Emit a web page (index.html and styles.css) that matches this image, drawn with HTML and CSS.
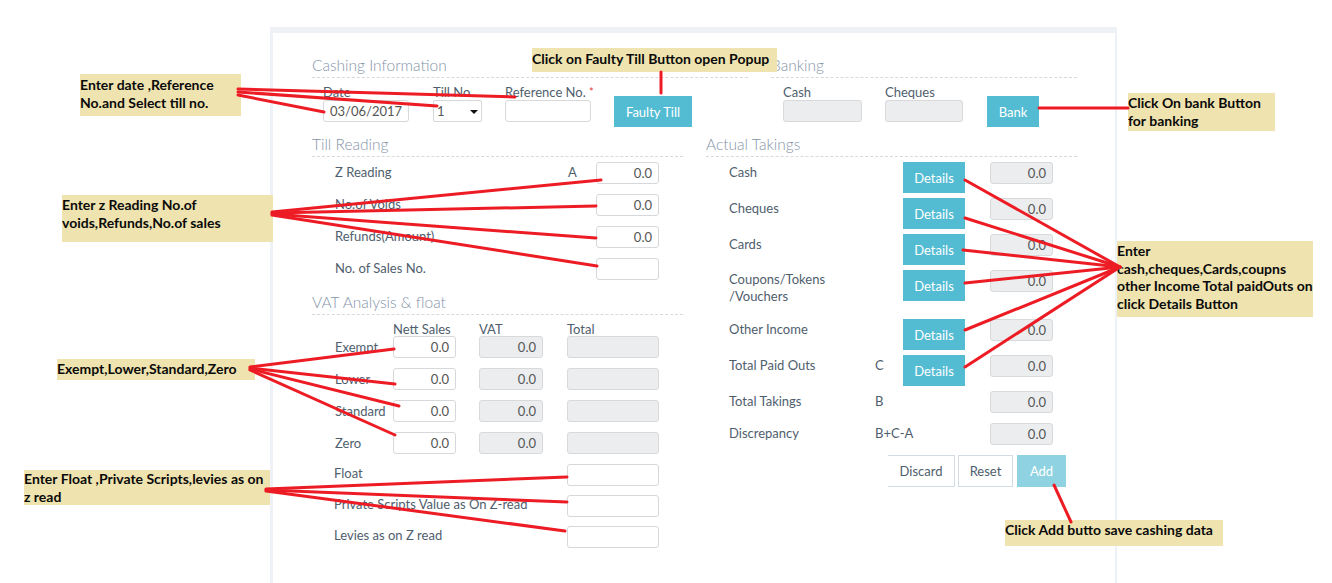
FILE: index.html
```html
<!DOCTYPE html>
<html>
<head>
<meta charset="utf-8">
<title>Cashing</title>
<link rel="stylesheet" href="styles.css">
</head>
<body>
<div class="page">
  <div class="panel">
    <div class="card">
      <div class="top-row">
        <section class="sec-cash">
          <h2 class="sec-title">Cashing Information</h2>
          <div class="fields">
            <div class="field f-date"><label>Date</label><div class="input">03/06/2017</div></div>
            <div class="field f-till"><label>Till No.</label><div class="input select">1<span class="caret"></span></div></div>
            <div class="field f-ref"><label>Reference No. <span class="req">*</span></label><div class="input"></div></div>
            <button class="btn btn-info btn-faulty">Faulty Till</button>
          </div>
        </section>
        <section class="sec-bank">
          <h2 class="sec-title">Banking</h2>
          <div class="fields bank-fields">
            <div class="field f-bcash"><label>Cash</label><div class="input ro"></div></div>
            <div class="field f-bcheq"><label>Cheques</label><div class="input ro"></div></div>
            <button class="btn btn-info btn-bank">Bank</button>
          </div>
        </section>
      </div>

      <div class="main-row">
        <div class="col">
          <h2 class="sec-title">Till Reading</h2>
          <div class="till-rows">
            <div class="till-row"><span class="lbl">Z Reading</span><span class="letter">A</span><div class="input num">0.0</div></div>
            <div class="till-row"><span class="lbl">No.of Voids</span><span class="letter"></span><div class="input num">0.0</div></div>
            <div class="till-row"><span class="lbl">Refunds(Amount)</span><span class="letter"></span><div class="input num">0.0</div></div>
            <div class="till-row"><span class="lbl">No. of Sales No.</span><span class="letter"></span><div class="input num"></div></div>
          </div>

          <h2 class="sec-title vat-title">VAT Analysis &amp; float</h2>
          <div class="vat-head">
            <span class="h-nett">Nett Sales</span><span class="h-vat">VAT</span><span class="h-total">Total</span>
          </div>
          <div class="vat-row"><span class="lbl">Exempt</span><div class="input num in-nett">0.0</div><div class="input num ro in-vat">0.0</div><div class="input ro in-total"></div></div>
          <div class="vat-row"><span class="lbl">Lower</span><div class="input num in-nett">0.0</div><div class="input num ro in-vat">0.0</div><div class="input ro in-total"></div></div>
          <div class="vat-row"><span class="lbl">Standard</span><div class="input num in-nett">0.0</div><div class="input num ro in-vat">0.0</div><div class="input ro in-total"></div></div>
          <div class="vat-row"><span class="lbl">Zero</span><div class="input num in-nett">0.0</div><div class="input num ro in-vat">0.0</div><div class="input ro in-total"></div></div>
          <div class="float-row"><span class="lbl">Float</span><div class="input in-total"></div></div>
          <div class="float-row"><span class="lbl">Private Scripts Value as On Z-read</span><div class="input in-total"></div></div>
          <div class="float-row"><span class="lbl">Levies as on Z read</span><div class="input in-total"></div></div>
        </div>

        <div class="col">
          <h2 class="sec-title">Actual Takings</h2>
          <div class="tk-rows">
            <div class="tk-row"><span class="lbl">Cash</span><span class="letter"></span><button class="btn btn-info btn-det">Details</button><div class="input num ro">0.0</div></div>
            <div class="tk-row"><span class="lbl">Cheques</span><span class="letter"></span><button class="btn btn-info btn-det">Details</button><div class="input num ro">0.0</div></div>
            <div class="tk-row"><span class="lbl">Cards</span><span class="letter"></span><button class="btn btn-info btn-det">Details</button><div class="input num ro">0.0</div></div>
            <div class="tk-row tall"><span class="lbl two">Coupons/Tokens<br>/Vouchers</span><span class="letter"></span><button class="btn btn-info btn-det">Details</button><div class="input num ro">0.0</div></div>
            <div class="tk-row"><span class="lbl">Other Income</span><span class="letter"></span><button class="btn btn-info btn-det">Details</button><div class="input num ro">0.0</div></div>
            <div class="tk-row"><span class="lbl">Total Paid Outs</span><span class="letter">C</span><button class="btn btn-info btn-det">Details</button><div class="input num ro">0.0</div></div>
            <div class="tk-row plain"><span class="lbl">Total Takings</span><span class="letter">B</span><span></span><div class="input num ro">0.0</div></div>
            <div class="tk-row plain"><span class="lbl">Discrepancy</span><span class="letter">B+C-A</span><span></span><div class="input num ro">0.0</div></div>
          </div>
          <div class="actions">
            <button class="btn btn-discard">Discard</button>
            <button class="btn btn-reset">Reset</button>
            <button class="btn btn-add">Add</button>
          </div>
        </div>
      </div>
    </div>
  </div>
</div>

<div class="note note-1">Enter date ,Reference<br>No.and Select till no.</div>
<div class="note note-2">Click on Faulty Till Button open Popup</div>
<div class="note note-3">Click On bank Button<br>for banking</div>
<div class="note note-4">Enter z Reading No.of<br>voids,Refunds,No.of sales</div>
<div class="note note-5">Exempt,Lower,Standard,Zero</div>
<div class="note note-6">Enter Float ,Private Scripts,levies as on<br>z read</div>
<div class="note note-7">Enter<br>cash,cheques,Cards,coupns<br>other Income Total paidOuts on<br>click Details Button</div>
<div class="note note-8">Click Add butto save cashing data</div>

<svg class="arrows" width="1332" height="583" viewBox="0 0 1332 583">
  <g stroke="#ed1c24" stroke-width="3" stroke-linecap="round" fill="none">
    <path d="M238 89 L515 97"/>
    <path d="M238 92 L437 106"/>
    <path d="M238 95 L324 112"/>
    <path d="M661 72 L661 93"/>
    <path d="M1039 108 L1128 108"/>
    <path d="M272 212 L601 180"/>
    <path d="M272 213 L596 206"/>
    <path d="M272 214 L596 238"/>
    <path d="M272 215 L597 266"/>
    <path d="M250 367 L394 349"/>
    <path d="M250 368 L395 384"/>
    <path d="M250 369 L399 406"/>
    <path d="M250 370 L395 435"/>
    <path d="M266 489 L567 477"/>
    <path d="M266 490 L567 502"/>
    <path d="M266 491 L565 531"/>
    <path d="M965 180 L1120 267"/>
    <path d="M965 218 L1120 267"/>
    <path d="M963 250 L1120 267"/>
    <path d="M965 283 L1120 267"/>
    <path d="M965 330 L1120 267"/>
    <path d="M965 367 L1120 267"/>
    <path d="M1054 485 L1071 522"/>
  </g>
</svg>
</body>
</html>
```

FILE: styles.css
```css
* { box-sizing: border-box; margin: 0; padding: 0; }

body {
  width: 1332px;
  height: 583px;
  overflow: hidden;
  position: relative;
  background: #ffffff;
  font-family: Lato, "Open Sans", sans-serif;
  font-size: 13px;
  color: #4f5e6d;
}

.page { padding: 27px 0 0 270px; height: 583px; }

.panel {
  width: 847px;
  height: 556px;
  background: #eef1f5;
  padding: 6px 2px 0 3px;
}

.card {
  background: #ffffff;
  height: 100%;
  padding: 20px 38px 0 39px;
}

.sec-title {
  font-size: 15.5px;
  font-weight: 300;
  color: #8595a8;
  line-height: 24px;
  border-bottom: 1px dashed #d9d9d9;
  white-space: nowrap;
}

.top-row { display: flex; gap: 23px; }
.sec-cash { width: 436px; }
.sec-bank { flex: 1; }

.fields {
  display: flex;
  align-items: flex-start;
  gap: 23px;
  padding-left: 11px;
  margin-top: 6px;
}
.bank-fields { padding-left: 12px; }

.field label {
  display: block;
  height: 16px;
  line-height: 16px;
  white-space: nowrap;
}
.req { color: #e23b3b; font-size: 11px; vertical-align: top; }

.input {
  height: 22px;
  border: 1px solid #d6d8da;
  border-radius: 3px;
  line-height: 20px;
  padding: 0 6px;
  color: #555;
  background: #fff;
  white-space: nowrap;
}
.input.ro { background: #ebedef; border-color: #d7d9db; }
.input.num { text-align: right; }

.f-date { width: 86px; }
.f-till { width: 49px; margin-left: 1px; }
.f-ref { width: 86px; }
.f-bcash { width: 79px; }
.f-bcheq { width: 78px; }

.select { position: relative; padding-left: 3px; border-radius: 2px; }
.caret {
  position: absolute;
  right: 3px;
  top: 9px;
  width: 0; height: 0;
  border-left: 4px solid transparent;
  border-right: 4px solid transparent;
  border-top: 4px solid #111;
}

.btn {
  font-family: inherit;
  font-size: 13px;
  border: none;
  background: none;
  cursor: pointer;
  color: #4f5e6d;
}
.btn-info { background: #53bcd3; color: #ffffff; }
.btn-faulty { width: 78px; height: 31px; margin-top: 12px; }
.btn-bank { width: 52px; height: 31px; margin-top: 12px; margin-left: 1px; }

.main-row { display: flex; gap: 23px; margin-top: 5px; }
.col { width: 371px; }

/* Till reading */
.till-rows { margin-top: 5px; }
.till-row {
  display: grid;
  grid-template-columns: 233px 28px 63px;
  padding-left: 23px;
  margin-bottom: 10px;
  line-height: 21px;
}
.letter { white-space: nowrap; }

.vat-title { margin-top: 9px; }
.vat-head {
  display: flex;
  padding-left: 81px;
  margin-top: 7px;
  height: 14px;
  line-height: 14px;
}
.h-nett { width: 63px; white-space: nowrap; }
.h-vat { width: 64px; margin-left: 23px; }
.h-total { margin-left: 24px; }

.vat-row {
  display: flex;
  padding-left: 23px;
  margin-bottom: 10px;
  line-height: 22px;
}
.vat-row .lbl { width: 58px; }
.in-nett { width: 63px; }
.in-vat { width: 64px; margin-left: 23px; }
.in-total { width: 92px; margin-left: 24px; }

.float-row {
  display: flex;
  padding-left: 22px;
  margin-bottom: 9px;
  line-height: 19px;
}
.float-row .lbl { width: 233px; white-space: nowrap; }
.float-row .in-total { margin-left: 0; }

/* Actual takings */
.tk-rows { margin-top: 5px; }
.tk-row {
  display: grid;
  grid-template-columns: 146px 28px 87px 63px;
  align-items: start;
  padding-left: 23px;
  margin-bottom: 5px;
  line-height: 21px;
  min-height: 31px;
}
.tk-row .input { line-height: 20px; }
.tk-row.plain { min-height: 22px; margin-bottom: 10px; }
.tk-row.tall { min-height: 44px; }
.lbl.two { line-height: 17px; padding-top: 1px; }
.btn-det { width: 62px; height: 31px; }

.actions {
  display: flex;
  justify-content: flex-end;
  padding-right: 11px;
}
.actions .btn { height: 32px; }
.btn-discard {
  width: 67px;
  border: 1px solid #d3dbe4;
  border-left: none;
}
.btn-reset {
  width: 55px;
  margin-left: 3px;
  border: 1px solid #d3dbe4;
}
.btn-add {
  width: 49px;
  margin-left: 4px;
  background: #8fd3e2;
  color: #ffffff;
}

/* Annotations */
.note {
  position: absolute;
  background: #efe4b0;
  color: #0a0a0a;
  font-family: Lato, "Liberation Sans", sans-serif;
  font-weight: 700;
  font-size: 14px;
  line-height: 18px;
  white-space: nowrap;
}
.note-1 { left: 80px; top: 74px; width: 161px; height: 42px; padding-top: 2px; }
.note-2 { left: 532px; top: 48px; width: 245px; height: 24px; padding-top: 2px; }
.note-3 { left: 1128px; top: 93px; width: 147px; height: 38px; padding-top: 1px; }
.note-4 { left: 62px; top: 195px; width: 211px; height: 47px; padding-top: 1px; }
.note-5 { left: 57px; top: 359px; width: 198px; height: 21px; padding-top: 1px; }
.note-6 { left: 24px; top: 470px; width: 246px; height: 35px; }
.note-7 { left: 1117px; top: 241px; width: 196px; height: 76px; padding-top: 1px; line-height: 17.7px; }
.note-8 { left: 1005px; top: 520px; width: 218px; height: 26px; padding-top: 1px; }

.arrows {
  position: absolute;
  left: 0;
  top: 0;
  pointer-events: none;
}
```
